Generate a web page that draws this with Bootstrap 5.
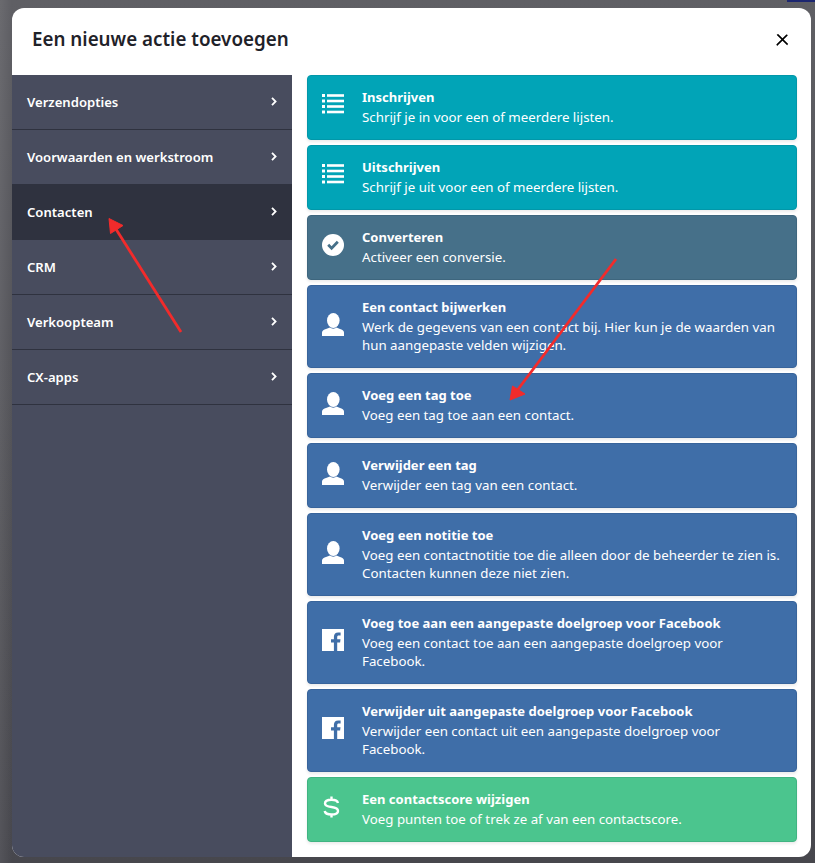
<!doctype html>
<html lang="nl"><head><meta charset="utf-8"><title>Actie</title>
<link href="https://cdn.jsdelivr.net/npm/bootstrap@5.3.0/dist/css/bootstrap.min.css" rel="stylesheet">
<style>
html,body{height:100%}
body{background:linear-gradient(90deg,rgba(255,255,255,.07),rgba(255,255,255,0) 12px),linear-gradient(#5f5f64,#47474d);font-family:"Noto Sans",sans-serif;overflow:hidden}
.stage{padding:8px 4px 6px 12px;height:863px}
.dlg{width:799px;height:849px;border:0;border-radius:12px;overflow:hidden;background:#fff}
.dlg .modal-header{height:67px;padding:0 20px 4px;border:0;flex:none}
.dlg .modal-title{font-size:18.800px;font-weight:600;color:#1f2229}
.dlg .btn-close{width:14px;height:14px;padding:0;margin:0 2px 0 0;opacity:1;background-size:13px}
.side{width:280px;background:#484c5e;flex:none}
.side-item{height:55px;padding:1px 15px 0;color:#fff;font-size:13.100px;font-weight:600;border-bottom:1px solid #2f323f}
.side-item svg{margin-bottom:3px}
.side-item.on{background:#2f323f;border-bottom-color:#2f323f}
.acts{padding:0 14px 15px 15px;gap:5px}
.act{color:#fff;border:1px solid;border-radius:4px;padding:11px 14px 13px 14px;box-shadow:0 2px 3px rgba(0,0,0,.08)}
.act-ic{width:22px;margin:0 18px 3px 0;flex:none}
.act-t{font-size:13px;font-weight:700;line-height:21px}
.act-d{font-size:13.300px;line-height:18px}
.c-teal{background:#01a4b7;border-color:#0297a9}
.c-slate{background:#467089;border-color:#3e667e}
.c-blue{background:#3f6ea8;border-color:#38649b}
.c-green{background:#4bc58e;border-color:#40b482}
.arrows{position:absolute;left:0;top:0;pointer-events:none}
.topbit{position:absolute;right:0;top:0;width:28px;height:2px;background:#1c2670}
</style></head><body>
<svg width="0" height="0" class="d-block"><defs>
<symbol id="i-list" viewBox="0 0 22 22"><g fill="#fff"><rect x="0" y="0" width="3" height="3"/><rect x="0" y="5.500" width="3" height="3"/><rect x="0" y="11" width="3" height="3"/><rect x="0" y="16.500" width="3" height="3"/><rect x="5" y=".2" width="17" height="2.600"/><rect x="5" y="5.700" width="17" height="2.600"/><rect x="5" y="11.200" width="17" height="2.600"/><rect x="5" y="16.700" width="17" height="2.600"/></g></symbol>
<symbol id="i-check" viewBox="0 0 22 22"><circle cx="11" cy="11" r="11" fill="#fff"/><path d="M6.200 10.800l3.400 3.400 6.200-6.400" fill="none" stroke="#467089" stroke-width="2.800"/></symbol>
<symbol id="i-user" viewBox="0 0 22 23"><ellipse cx="11.300" cy="7.500" rx="6.300" ry="7.500" fill="#fff"/><path fill="#fff" d="M0 23v-3.500c0-2 2-3 4-3.600l4-1.400c1.500 1.500 5 1.500 6.500 0l3.500 1.400c2 .6 4 1.600 4 3.600V23z"/></symbol>
<symbol id="i-fb" viewBox="0 0 22 22"><path fill="#fff" fill-rule="evenodd" d="M0 0h22v22h-6.800v-8.500h2.900l.4-3.300h-3.300V8.100c0-1 .3-1.600 1.700-1.600h1.700V3.500c-.3 0-1.300-.1-2.500-.1-2.500 0-4.200 1.500-4.200 4.300v2.500H9v3.300h2.900V22H0z"/></symbol>
<symbol id="i-dollar" viewBox="0 0 22 22"><path fill="none" stroke="#fff" stroke-width="2.400" d="M16 7C15.500 5 13 3.700 9.500 3.700 5.500 3.700 3 5.200 3 7.500 3 10 5.500 10.500 9.500 11c4 .5 6.500 1.500 6.500 4 0 2.300-2.500 3.500-6.500 3.500-4 0-6.500-1.500-6.800-3.500M9.500.5v3.200M9.500 18.500v3"/></symbol>
<symbol id="i-chev" viewBox="0 0 6 9"><path d="M1 .8l3.600 3.700L1 8.200" fill="none" stroke="#fff" stroke-width="1.800"/></symbol>
</defs></svg>
<div class="stage">
<div class="modal-content dlg">
  <div class="modal-header"><h5 class="modal-title">Een nieuwe actie toevoegen</h5><button type="button" class="btn-close" aria-label="Sluiten"></button></div>
  <div class="d-flex flex-grow-1">
    <div class="side">
      <div class="side-item d-flex align-items-center justify-content-between"><span>Verzendopties</span><svg width="6" height="9"><use href="#i-chev"/></svg></div>
      <div class="side-item d-flex align-items-center justify-content-between"><span>Voorwaarden en werkstroom</span><svg width="6" height="9"><use href="#i-chev"/></svg></div>
      <div class="side-item on d-flex align-items-center justify-content-between"><span>Contacten</span><svg width="6" height="9"><use href="#i-chev"/></svg></div>
      <div class="side-item d-flex align-items-center justify-content-between"><span>CRM</span><svg width="6" height="9"><use href="#i-chev"/></svg></div>
      <div class="side-item d-flex align-items-center justify-content-between"><span>Verkoopteam</span><svg width="6" height="9"><use href="#i-chev"/></svg></div>
      <div class="side-item d-flex align-items-center justify-content-between"><span>CX-apps</span><svg width="6" height="9"><use href="#i-chev"/></svg></div>
    </div>
    <div class="acts flex-grow-1 d-flex flex-column">
      <div class="act c-teal d-flex align-items-center"><svg class="act-ic" width="22" height="22"><use href="#i-list"/></svg><div class="flex-grow-1"><div class="act-t">Inschrijven</div><div class="act-d">Schrijf je in voor een of meerdere lijsten.</div></div></div>
      <div class="act c-teal d-flex align-items-center"><svg class="act-ic" width="22" height="22"><use href="#i-list"/></svg><div class="flex-grow-1"><div class="act-t">Uitschrijven</div><div class="act-d">Schrijf je uit voor een of meerdere lijsten.</div></div></div>
      <div class="act c-slate d-flex align-items-center"><svg class="act-ic" width="22" height="22"><use href="#i-check"/></svg><div class="flex-grow-1"><div class="act-t">Converteren</div><div class="act-d">Activeer een conversie.</div></div></div>
      <div class="act c-blue d-flex align-items-center"><svg class="act-ic" width="22" height="23"><use href="#i-user"/></svg><div class="flex-grow-1"><div class="act-t">Een contact bijwerken</div><div class="act-d">Werk de gegevens van een contact bij. Hier kun je de waarden van hun aangepaste velden wijzigen.</div></div></div>
      <div class="act c-blue d-flex align-items-center"><svg class="act-ic" width="22" height="23"><use href="#i-user"/></svg><div class="flex-grow-1"><div class="act-t">Voeg een tag toe</div><div class="act-d">Voeg een tag toe aan een contact.</div></div></div>
      <div class="act c-blue d-flex align-items-center"><svg class="act-ic" width="22" height="23"><use href="#i-user"/></svg><div class="flex-grow-1"><div class="act-t">Verwijder een tag</div><div class="act-d">Verwijder een tag van een contact.</div></div></div>
      <div class="act c-blue d-flex align-items-center"><svg class="act-ic" width="22" height="23"><use href="#i-user"/></svg><div class="flex-grow-1"><div class="act-t">Voeg een notitie toe</div><div class="act-d">Voeg een contactnotitie toe die alleen door de beheerder te zien is. Contacten kunnen deze niet zien.</div></div></div>
      <div class="act c-blue d-flex align-items-center"><svg class="act-ic" width="22" height="22"><use href="#i-fb"/></svg><div class="flex-grow-1"><div class="act-t">Voeg toe aan een aangepaste doelgroep voor Facebook</div><div class="act-d">Voeg een contact toe aan een aangepaste doelgroep voor Facebook.</div></div></div>
      <div class="act c-blue d-flex align-items-center"><svg class="act-ic" width="22" height="22"><use href="#i-fb"/></svg><div class="flex-grow-1"><div class="act-t">Verwijder uit aangepaste doelgroep voor Facebook</div><div class="act-d">Verwijder een contact uit een aangepaste doelgroep voor Facebook.</div></div></div>
      <div class="act c-green d-flex align-items-center"><svg class="act-ic" width="22" height="22"><use href="#i-dollar"/></svg><div class="flex-grow-1"><div class="act-t">Een contactscore wijzigen</div><div class="act-d">Voeg punten toe of trek ze af van een contactscore.</div></div></div>
    </div>
  </div>
</div>
</div>
<div class="topbit"></div>
<svg class="arrows" width="815" height="863"><g stroke="#f22b2b" fill="#f22b2b"><path d="M181 332L114 226" stroke-width="2.800" fill="none"/><path d="M109 218.500l14 7-12.500 8z" stroke-width="1"/><path d="M616 259L516 392" stroke-width="2.800" fill="none"/><path d="M510 400l2.500-14 12.500 8z" stroke-width="1"/></g></svg>
<script src="https://cdn.jsdelivr.net/npm/bootstrap@5.3.0/dist/js/bootstrap.bundle.min.js"></script>
</body></html>
